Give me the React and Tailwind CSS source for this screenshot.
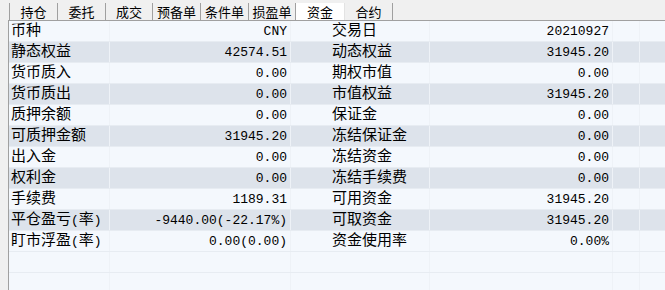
import React from "react";

const tabs = [
  { name: "持仓", w: "w-[49px]" },
  { name: "委托", w: "w-[48px]" },
  { name: "成交", w: "w-[47px]" },
  { name: "预备单", w: "w-[48px]" },
  { name: "条件单", w: "w-[48px]" },
  { name: "损盈单", w: "w-[47px]" },
  { name: "资金", w: "w-[49px]", active: true },
  { name: "合约", w: "w-[48px]" },
];

const rows = [
  ["币种", "CNY", "交易日", "20210927"],
  ["静态权益", "42574.51", "动态权益", "31945.20"],
  ["货币质入", "0.00", "期权市值", "0.00"],
  ["货币质出", "0.00", "市值权益", "31945.20"],
  ["质押余额", "0.00", "保证金", "0.00"],
  ["可质押金额", "31945.20", "冻结保证金", "0.00"],
  ["出入金", "0.00", "冻结资金", "0.00"],
  ["权利金", "0.00", "冻结手续费", "0.00"],
  ["手续费", "1189.31", "可用资金", "31945.20"],
  ["平仓盈亏(率)", "-9440.00(-22.17%)", "可取资金", "31945.20"],
  ["盯市浮盈(率)", "0.00(0.00)", "资金使用率", "0.00%"],
  null,
  null,
];

// labels may carry half-width parens, render them narrower like the bitmap font
const Label = ({ text }) => {
  const m = text.match(/^(.*)\((.*)\)$/);
  if (!m) return text;
  return (
    <>
      {m[1]}
      <span className="text-[13px]">(</span>
      {m[2]}
      <span className="text-[13px]">)</span>
    </>
  );
};

const cellLine = "border-r border-[#eef2f7]";

const App = () => {
  return (
    <div className="w-[665px] h-[290px] bg-[#f0f0f0] overflow-hidden flex flex-col font-['Liberation_Mono','Noto_Sans_CJK_SC',monospace] text-black">
      <div className="h-[20px] flex items-end pl-[9px] shrink-0">
        {tabs.map((t, i) => (
          <div
            key={t.name}
            className={`${t.w} h-[17px] flex items-center justify-center text-[13px] leading-none font-['Noto_Sans_CJK_SC',sans-serif] ${
              i === 0 ? "border-l border-[#a0a0a0]" : ""
            } ${
              t.active
                ? "bg-white border-r border-[#e3e3e3]"
                : "border-r border-[#a0a0a0]"
            }`}
          >
            {t.name}
          </div>
        ))}
      </div>

      <div className="flex-1 ml-[8px] border-l border-t border-[#a0a0a0] flex flex-col">
        {rows.map((r, i) => {
          const dark = r && i % 2 === 1;
          return (
            <div
              key={i}
              className={`h-[21px] shrink-0 flex border-b border-[#e7ecf2] ${
                dark ? "bg-[#dde3eb]" : "bg-[#f4f8fd]"
              }`}
            >
              <div className={`w-[101px] pl-[2px] flex items-center text-[15px] leading-none ${cellLine}`}>
                {r && <Label text={r[0]} />}
              </div>
              <div className={`w-[181px] pr-[3px] flex items-center justify-end text-[13px] leading-none ${cellLine}`}>
                {r && r[1]}
              </div>
              <div className={`w-[139px] pl-[41px] flex items-center text-[15px] leading-none ${cellLine}`}>
                {r && <Label text={r[2]} />}
              </div>
              <div className={`w-[183px] pr-[3px] flex items-center justify-end text-[13px] leading-none ${cellLine}`}>
                {r && r[3]}
              </div>
              <div className={`w-[27px] ${cellLine}`} />
              <div className="w-[25px]" />
            </div>
          );
        })}
      </div>
    </div>
  );
};

export default App;
